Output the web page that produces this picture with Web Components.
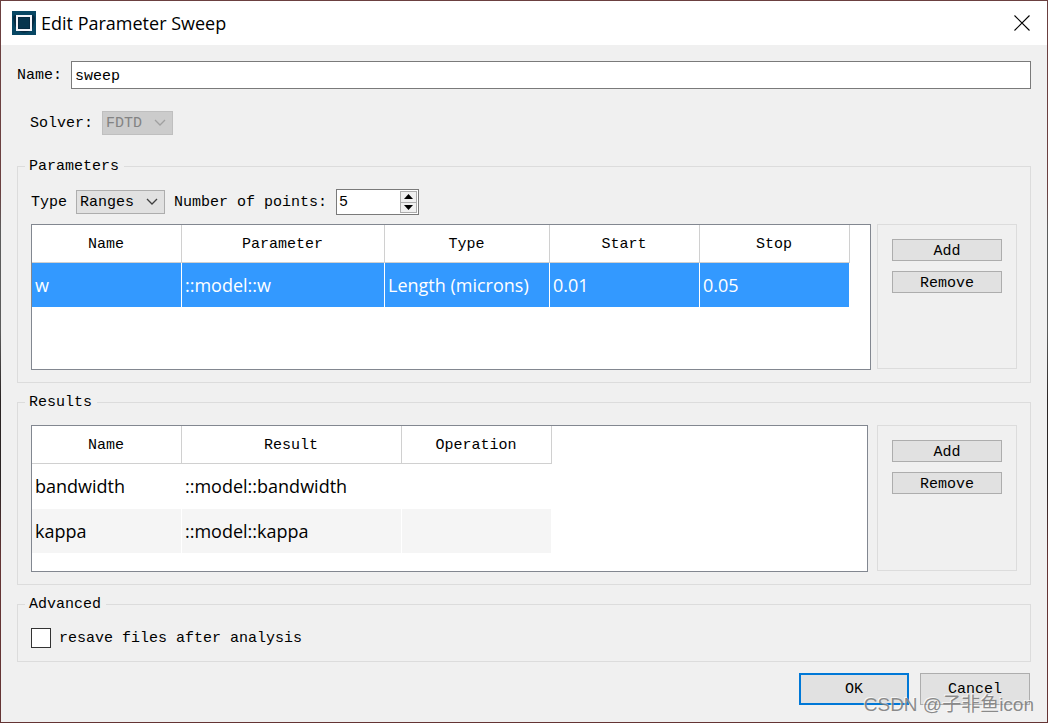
<!DOCTYPE html>
<html lang="en">
<head>
<meta charset="utf-8">
<title>Edit Parameter Sweep</title>
<style>
  html, body { margin: 0; }
  body {
    --ui: 15px/20px "Liberation Mono", "Noto Sans CJK SC", monospace;
    --data: 18px/24px "Open Sans", "Noto Sans", sans-serif;
    --text-top: 2px;
    --face: #f0f0f0;
    --line: #dcdcdc;
    --frame: #828790;
    font: var(--ui);
    color: #000;
  }
</style>
</head>
<body>
<sweep-dialog></sweep-dialog>

<template id="t-dialog">
  <style>
    :host {
      display: flex; box-sizing: border-box; min-height: 100vh; padding: 1px; position: relative;
      background: linear-gradient(to bottom, #6b4040 0 190px, #5c5c5c 230px 330px, #2a2424 400px 480px, #643434 560px);
    }
    .window { flex: 1; min-width: 0; display: flex; flex-direction: column; background: var(--face); }
    main { display: flex; flex-direction: column; padding: 16px 16px 17px; }
    .solver { padding: 22px 13px 21px; }
    .groups { display: flex; flex-direction: column; gap: 9px; }
    .row { display: flex; align-items: center; gap: 9px; margin-bottom: 9px; }
    .split { display: flex; gap: 6px; }
    .split.wide { gap: 9px; }
    data-grid { flex: 1; min-width: 0; }
    .actions { display: flex; justify-content: flex-end; gap: 11px; padding: 11px 1px 0; }
    .mark {
      position: absolute; right: 14px; bottom: 4px; pointer-events: none;
      font: 19px/28px "Liberation Sans", "Noto Sans CJK SC", sans-serif;
      color: rgba(120, 120, 120, .85); text-shadow: -1px -1px 0 rgba(255, 255, 255, .7);
    }
  </style>
  <div class="window">
    <title-bar>Edit Parameter Sweep</title-bar>
    <main>
      <text-field label="Name:" value="sweep"></text-field>
      <drop-down class="solver" label="Solver:" value="FDTD" disabled></drop-down>
      <div class="groups">
        <group-box label="Parameters">
          <div class="row">
            <drop-down label="Type" value="Ranges"></drop-down>
            <spin-box label="Number of points:" value="5"></spin-box>
          </div>
          <div class="split">
            <data-grid selected="0" space="146"
              columns='[["Name",150],["Parameter",203],["Type",165],["Start",150],["Stop",150]]'
              rows='[["w","::model::w","Length (microns)","0.01","0.05"]]'></data-grid>
            <side-panel>
              <push-button size="small">Add</push-button>
              <push-button size="small">Remove</push-button>
            </side-panel>
          </div>
        </group-box>
        <group-box label="Results">
          <div class="split wide">
            <data-grid space="147"
              columns='[["Name",150],["Result",220],["Operation",150]]'
              rows='[["bandwidth","::model::bandwidth",""],["kappa","::model::kappa",""]]'></data-grid>
            <side-panel>
              <push-button size="small">Add</push-button>
              <push-button size="small">Remove</push-button>
            </side-panel>
          </div>
        </group-box>
        <group-box label="Advanced">
          <check-box>resave files after analysis</check-box>
        </group-box>
      </div>
      <div class="actions">
        <push-button primary>OK</push-button>
        <push-button>Cancel</push-button>
      </div>
    </main>
  </div>
  <div class="mark">CSDN @子非鱼icon</div>
</template>

<template id="t-title">
  <style>
    :host { display: flex; align-items: center; height: 44px; padding: 0 9px 0 11px; background: #fff; font: var(--data); }
    .logo { width: 24px; height: 24px; margin-right: 5px; }
    h1 { flex: 1; margin: 0; font: inherit; font-weight: 400; }
    button { width: 32px; height: 32px; padding: 0; border: 0; background: none; display: grid; place-items: center; }
  </style>
  <svg class="logo" viewBox="0 0 24 24" aria-hidden="true">
    <rect width="24" height="24" fill="#074663"/>
    <path d="M1 7Q1 4 5 4H20Q23 4 23 8L20 19Q12 24 7 20L3 15Z" fill="#062b42"/>
    <rect x="7" y="7" width="10" height="10" fill="#06344d"/>
    <rect x="5" y="5" width="14" height="14" fill="none" stroke="#f4f4fa" stroke-width="2"/>
  </svg>
  <h1><slot></slot></h1>
  <button aria-label="Close"><svg width="16" height="16" viewBox="0 0 16 16"><path d="M.5 .5l15 15M15.500 .5l-15 15" stroke="#000" fill="none" stroke-width="1.100"/></svg></button>
</template>

<template id="t-text">
  <style>
    :host { display: flex; align-items: center; gap: 9px; }
    label { padding-top: var(--text-top); }
    input { flex: 1; min-width: 0; box-sizing: border-box; height: 28px; padding: var(--text-top) 3px 0; border: 1px solid #7a7a7a; border-radius: 0; background: #fff; font: var(--ui); color: #000; }
  </style>
  <label for="f"></label><input id="f" type="text">
</template>

<template id="t-drop">
  <style>
    :host { display: flex; align-items: center; gap: 9px; }
    label { padding-top: var(--text-top); }
    .box { position: relative; }
    select { appearance: none; display: block; box-sizing: border-box; height: 24px; margin: 0; padding: var(--text-top) 29px 0 3px; border: 1px solid #adadad; border-radius: 0; background: #e1e1e1; font: var(--ui); color: #000; }
    select:disabled { background: #ccc; border-color: #bfbfbf; color: #838383; opacity: 1; }
    svg { position: absolute; right: 7px; top: 8px; pointer-events: none; stroke: #404040; }
    select:disabled + svg { stroke: #a0a0a0; }
  </style>
  <label for="f"></label>
  <div class="box"><select id="f"><option></option></select><svg width="12" height="8" viewBox="0 0 12 8"><path d="M1 1l5 5 5-5" fill="none" stroke-width="1.300"/></svg></div>
</template>

<template id="t-spin">
  <style>
    :host { display: flex; align-items: center; gap: 9px; }
    label { padding-top: var(--text-top); }
    .box { display: flex; box-sizing: border-box; width: 83px; height: 26px; border: 1px solid #7a7a7a; background: #fff; }
    input { flex: 1; min-width: 0; padding: var(--text-top) 2px 0; border: 0; background: none; font: var(--ui); color: #000; appearance: textfield; }
    input::-webkit-inner-spin-button { appearance: none; margin: 0; }
    .steps { display: flex; flex-direction: column; width: 17px; padding: 1px; }
    button { flex: 1; display: grid; place-items: center; padding: 0; border: 1px solid #adadad; background: #f0f0f0; }
    button + button { margin-top: -1px; }
    svg { display: block; }
  </style>
  <label for="f"></label>
  <div class="box"><input id="f" type="number">
    <div class="steps">
      <button aria-label="Increase"><svg width="9" height="5"><path d="M4.500 0L9 5H0z"/></svg></button>
      <button aria-label="Decrease"><svg width="9" height="5"><path d="M0 0H9L4.500 5z"/></svg></button>
    </div>
  </div>
</template>

<template id="t-group">
  <style>
    :host { display: block; }
    fieldset { margin: 0; min-width: 0; padding: 0 7px 12px; border: 1px solid var(--line); }
    legend { padding: 1px 5px 0 4px; }
    .content { padding: 12px 6px 0; }
  </style>
  <fieldset><legend></legend><div class="content"><slot></slot></div></fieldset>
</template>

<template id="t-grid">
  <style>
    :host { display: block; box-sizing: border-box; border: 1px solid var(--frame); background: #fff; overflow: hidden; }
    table { table-layout: fixed; border-collapse: separate; border-spacing: 0; }
    th, td { box-sizing: border-box; padding: 0 3px; white-space: nowrap; }
    th { height: 38px; padding: var(--text-top) 1px 0 0; border: solid #d0d0d0; border-width: 0 1px 1px 0; font: var(--ui); font-weight: 400; text-align: center; }
    td { height: 45px; border: solid #fff; border-width: 0 1px 1px 0; font: var(--data); background-clip: padding-box; }
    tbody tr:nth-child(even) td { background-color: #f5f5f5; }
    tbody tr.selected td { background-color: #39f; color: #fff; }
  </style>
  <table><colgroup></colgroup><thead><tr></tr></thead><tbody></tbody></table>
</template>

<template id="t-side">
  <style>
    :host { display: flex; flex-direction: column; gap: 10px; box-sizing: border-box; width: 140px; padding: 14px; margin-bottom: 1px; border: 1px solid var(--line); }
  </style>
  <slot></slot>
</template>

<template id="t-button">
  <style>
    :host { display: block; }
    button { box-sizing: border-box; display: block; width: 110px; height: 32px; padding: var(--text-top) 0 0; border: 1px solid #adadad; border-radius: 0; background: #e1e1e1; font: var(--ui); color: #000; }
    :host([size="small"]) button { height: 22px; }
    :host([primary]) button { border: 2px solid #0078d7; }
  </style>
  <button type="button"><slot></slot></button>
</template>

<template id="t-check">
  <style>
    :host { display: block; }
    label { display: flex; align-items: center; gap: 8px; height: 22px; }
    span { padding-top: var(--text-top); }
    input { appearance: none; box-sizing: border-box; width: 20px; height: 20px; margin: 0; border: 1px solid #333; background: #fff; }
    input:checked { box-shadow: inset 0 0 0 4px #fff; background: #333; }
  </style>
  <label><input type="checkbox"><span><slot></slot></span></label>
</template>

<script>
  class Base extends HTMLElement {
    constructor() {
      super();
      this.attachShadow({ mode: 'open' }).append(
        document.getElementById(this.constructor.template).content.cloneNode(true));
    }
    $(selector) { return this.shadowRoot.querySelector(selector); }
  }

  class TextField extends Base {
    static template = 't-text';
    connectedCallback() {
      this.$('label').textContent = this.getAttribute('label');
      this.$('input').value = this.getAttribute('value');
    }
  }

  class SpinBox extends TextField {
    static template = 't-spin';
    connectedCallback() {
      super.connectedCallback();
      const [up, down] = this.shadowRoot.querySelectorAll('button');
      up.onclick = () => this.$('input').stepUp();
      down.onclick = () => this.$('input').stepDown();
    }
  }

  class DropDown extends Base {
    static template = 't-drop';
    connectedCallback() {
      this.$('label').textContent = this.getAttribute('label');
      this.$('option').textContent = this.getAttribute('value');
      this.$('select').disabled = this.hasAttribute('disabled');
    }
  }

  class GroupBox extends Base {
    static template = 't-group';
    connectedCallback() { this.$('legend').textContent = this.getAttribute('label'); }
  }

  class DataGrid extends Base {
    static template = 't-grid';
    connectedCallback() {
      const columns = JSON.parse(this.getAttribute('columns'));
      const selected = this.getAttribute('selected');
      this.style.minHeight = this.getAttribute('space') + 'px';
      this.$('table').style.width = columns.reduce((sum, c) => sum + c[1], 0) + 'px';
      for (const [name, width] of columns) {
        const col = document.createElement('col');
        col.style.width = width + 'px';
        this.$('colgroup').append(col);
        const th = document.createElement('th');
        th.textContent = name;
        this.$('thead tr').append(th);
      }
      JSON.parse(this.getAttribute('rows')).forEach((cells, i) => {
        const tr = this.$('tbody').insertRow();
        tr.classList.toggle('selected', String(i) === selected);
        for (const text of cells) tr.insertCell().textContent = text;
      });
    }
  }

  customElements.define('title-bar', class extends Base { static template = 't-title'; });
  customElements.define('text-field', TextField);
  customElements.define('drop-down', DropDown);
  customElements.define('spin-box', SpinBox);
  customElements.define('group-box', GroupBox);
  customElements.define('data-grid', DataGrid);
  customElements.define('side-panel', class extends Base { static template = 't-side'; });
  customElements.define('push-button', class extends Base { static template = 't-button'; });
  customElements.define('check-box', class extends Base { static template = 't-check'; });
  customElements.define('sweep-dialog', class extends Base { static template = 't-dialog'; });
</script>
</body>
</html>
